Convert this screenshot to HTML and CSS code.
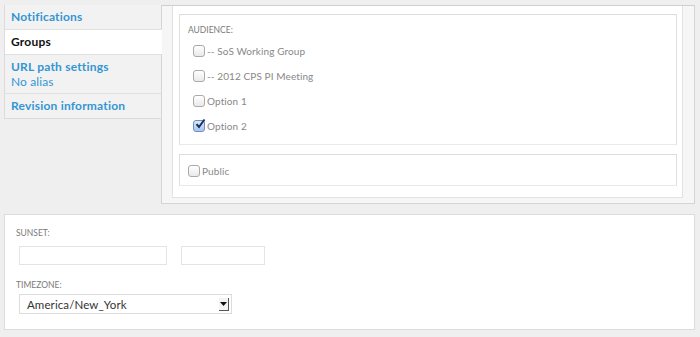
FILE: index.html
```html
<!DOCTYPE html>
<html>
<head>
	<title>Groups</title>
	<link rel="stylesheet" href="styles.css">
</head>
<body>
	<div class="wrap">
		<div class="top">
			<ul class="tabs">
				<li class="tab"><a href="#">Notifications</a></li>
				<li class="tab sel"><a href="#">Groups</a></li>
				<li class="tab"><a href="#">URL path settings</a><span class="sum">No alias</span></li>
				<li class="tab"><a href="#">Revision information</a></li>
			</ul>
			<div class="panel">
				<div class="pane">
					<div class="box aud">
						<div class="lbl">AUDIENCE:</div>
						<label class="opt"><span class="cb"></span>-- SoS Working Group</label>
						<label class="opt"><span class="cb"></span>-- 2012 CPS PI Meeting</label>
						<label class="opt"><span class="cb"></span>Option 1</label>
						<label class="opt"><span class="cb on"><svg width="12" height="12" viewBox="0 0 12 12"><path d="M2.5 6.2 L5 9 L10.5 1.5" fill="none" stroke="#1a2f5a" stroke-width="2"/></svg></span>Option 2</label>
					</div>
					<div class="box pub">
						<label class="opt"><span class="cb"></span>Public</label>
					</div>
				</div>
			</div>
		</div>
		<div class="bottom">
			<div class="lbl">SUNSET:</div>
			<div class="row">
				<span class="inp wide"></span>
				<span class="inp short"></span>
			</div>
			<div class="lbl tz">TIMEZONE:</div>
			<div class="sel-box">
				<span>America/New_York</span>
				<span class="arr"><svg width="7" height="4" viewBox="0 0 7 4"><path d="M0 0 L7 0 L3.5 4 Z" fill="#111"/></svg></span>
			</div>
		</div>
	</div>
</body>
</html>
```
FILE: styles.css
```css
body{
	margin:0;
	background:#efefef;
	font-family:Lato,"DejaVu Sans",sans-serif;
}
.wrap{
	padding:5px 5px 0 4px;
}
.top{
	display:flex;
	align-items:flex-start;
}
.tabs{
	list-style:none;
	margin:0;
	padding:0;
	width:156px;
	background:#f2f2f2;
	border-left:1px solid #dcdcdc;
	border-bottom:1px solid #dcdcdc;
}
.tab{
	padding:5px 6px 5px 6px;
	border-top:1px solid #e0e0e0;
	font-size:12px;
	font-weight:bold;
	line-height:14px;
}
.tab:first-child{
	border-top:none;
	padding-top:5px;
}
.tab a{
	color:#3396d3;
	text-decoration:none;
	display:block;
	letter-spacing:0.2px;
}
.tab .sum{
	display:block;
	color:#3396d3;
	font-weight:normal;
	font-size:12px;
	line-height:14px;
	margin-top:1px;
	letter-spacing:0.1px;
}
.tab:nth-child(3){
	padding-top:5px;
	padding-bottom:4px;
}
.tab.sel{
	background:#fff;
	margin-right:-1px;
	position:relative;
}
.tab.sel a{
	color:#111;
}
.panel{
	flex:1;
	background:#f6f6f6;
	border:1px solid #d4d4d4;
	border-top-color:#cfcfcf;
	padding:0 11px 2px 10px;
	height:195px;
}
.pane{
	background:#fff;
	border-left:1px solid #e2e2e2;
	border-right:1px solid #e2e2e2;
	border-bottom:1px solid #e2e2e2;
	padding:8px 5px 11px 6px;
}
.box{
	border:1px solid #dedede;
	border-bottom-color:#eaeaea;
}
.aud{
	height:129px;
	padding:0 8px;
}
.pub{
	margin-top:9px;
	height:30px;
	padding:0 8px;
}
.lbl{
	font-size:8.5px;
	color:#7a7a7a;
	padding-top:10px;
	height:14px;
}
.opt{
	display:flex;
	align-items:center;
	height:25px;
	font-size:10px;
	color:#888;
	letter-spacing:0.1px;
}
.aud .opt{
	padding-left:5px;
}
.aud .opt:first-of-type{
	margin-top:-1px;
}
.pub .opt{
	height:32px;
}
.cb{
	width:10px;
	height:10px;
	border:1px solid #aaa;
	border-radius:3px;
	background:linear-gradient(#fff,#e9e9e9);
	margin-right:2px;
	position:relative;
}
.cb.on{
	border-color:#6d8fc5;
	background:linear-gradient(#dbe8fa,#a9c5ef);
}
.cb svg{
	position:absolute;
	left:0;
	top:-3px;
}
.bottom{
	margin-top:10px;
	background:#fff;
	border:1px solid #dcdcdc;
	height:114px;
	padding:0 10px;
}
.bottom .lbl{
	padding-top:13px;
	padding-left:1px;
	height:13px;
}
.bottom .lbl + .row{
	margin-top:5px;
}
.row{
	display:flex;
	gap:14px;
	padding-left:4px;
}
.inp{
	height:17px;
	border:1px solid #e4e4e4;
	display:block;
}
.wide{
	width:146px;
}
.short{
	width:82px;
}
.bottom .tz{
	padding-top:15px;
}
.sel-box{
	margin-left:4px;
	margin-top:1px;
	height:20px;
	border:1px solid #dcdcdc;
	display:flex;
	align-items:center;
	justify-content:space-between;
	font-size:11.5px;
	color:#333;
	padding-left:7px;
	box-sizing:border-box;
	width:213px;
	letter-spacing:0.1px;
}
.arr{
	width:9px;
	height:12px;
	margin-right:2px;
	border-right:1px solid #555;
	border-bottom:1px solid #555;
	background:#f4f4f4;
	display:flex;
	align-items:center;
	justify-content:center;
}
```
